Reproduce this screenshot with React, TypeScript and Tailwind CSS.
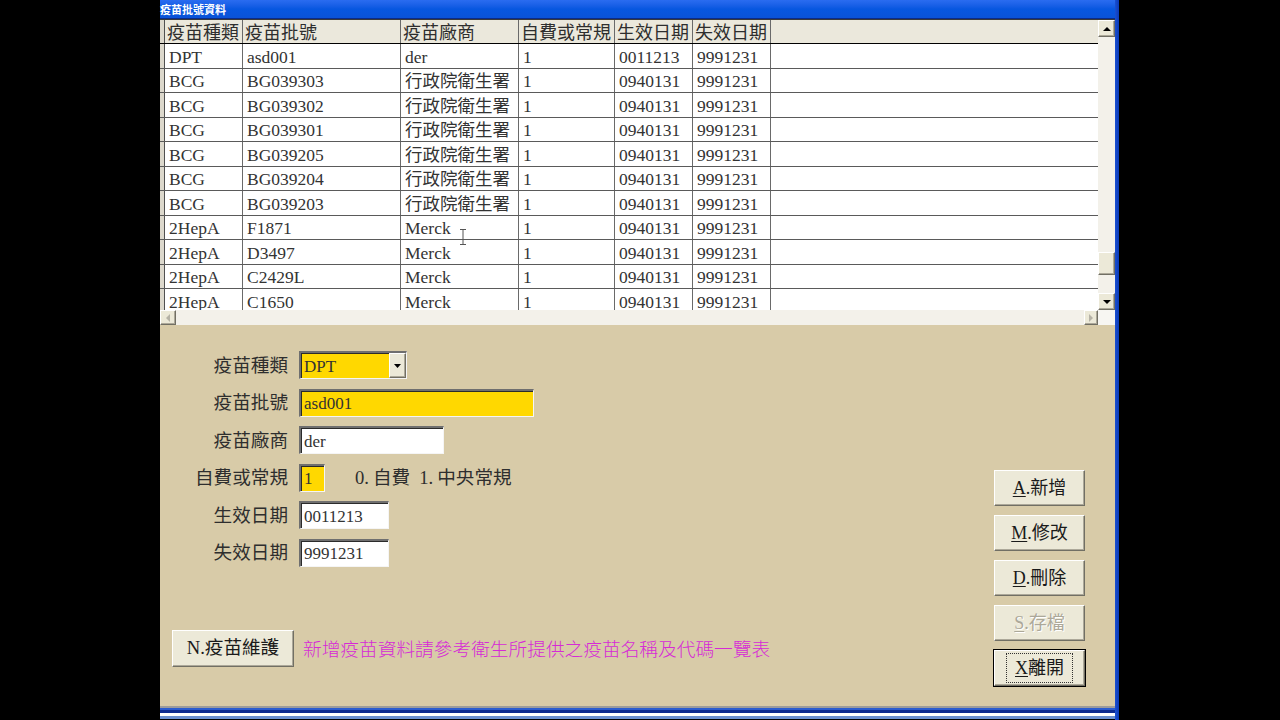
import React from "react";

const colW = ["w-[78px]", "w-[158px]", "w-[118px]", "w-[96px]", "w-[78px]", "w-[78px]"];
const headers = ["疫苗種類", "疫苗批號", "疫苗廠商", "自費或常規", "生效日期", "失效日期"];
const rows: string[][] = [
  ["DPT", "asd001", "der", "1", "0011213", "9991231"],
  ["BCG", "BG039303", "行政院衛生署", "1", "0940131", "9991231"],
  ["BCG", "BG039302", "行政院衛生署", "1", "0940131", "9991231"],
  ["BCG", "BG039301", "行政院衛生署", "1", "0940131", "9991231"],
  ["BCG", "BG039205", "行政院衛生署", "1", "0940131", "9991231"],
  ["BCG", "BG039204", "行政院衛生署", "1", "0940131", "9991231"],
  ["BCG", "BG039203", "行政院衛生署", "1", "0940131", "9991231"],
  ["2HepA", "F1871", "Merck", "1", "0940131", "9991231"],
  ["2HepA", "D3497", "Merck", "1", "0940131", "9991231"],
  ["2HepA", "C2429L", "Merck", "1", "0940131", "9991231"],
  ["2HepA", "C1650", "Merck", "1", "0940131", "9991231"],
];

const raised =
  "bg-[#ece9d8] border-t border-l border-t-white border-l-white border-b border-r border-b-[#716f64] border-r-[#716f64] shadow-[inset_-1px_-1px_0_#aca899]";

function Arrow({ dir }: { dir: "up" | "down" | "left" | "right" }) {
  const pts = {
    up: "1,5 5,1 9,5",
    down: "1,1 5,5 9,1",
    left: "5,1 1,5 5,9",
    right: "1,1 5,5 1,9",
  }[dir];
  const dims = dir === "up" || dir === "down" ? { w: 10, h: 6 } : { w: 6, h: 10 };
  return (
    <svg width={dims.w} height={dims.h} viewBox={`0 0 ${dims.w} ${dims.h}`}>
      <polygon points={pts} fill={dir === "left" || dir === "right" ? "#b5b2a6" : "#000"} />
    </svg>
  );
}

function Field({ w, bg, value }: { w: string; bg: string; value: string }) {
  return (
    <div
      className={`${w} ${bg} h-[28px] border-t-2 border-l-2 border-t-[#6f6f6f] border-l-[#6f6f6f] border-b border-r border-b-[#f5f5f5] border-r-[#f5f5f5] shadow-[inset_1px_1px_0_#2b2b2b] pl-[3px] pt-[1px] flex items-center text-[17px] leading-none text-[#333]`}
    >
      {value}
    </div>
  );
}

function Btn({
  k,
  rest,
  disabled,
  focused,
  w = "w-[91px]",
}: {
  k: string;
  rest: string;
  disabled?: boolean;
  focused?: boolean;
  w?: string;
}) {
  return (
    <div
      className={`${w} h-[36px] ${raised} flex items-center justify-center text-[18px] leading-none ${
        disabled ? "text-[#aca899] [text-shadow:1px_1px_0_#ffffff]" : "text-[#1a1a1a]"
      } ${focused ? "outline outline-1 outline-black" : ""}`}
    >
      <div className={`px-[8px] py-[5px] ${focused ? "border border-dotted border-[#333]" : "border border-transparent"}`}>
        <span className="underline underline-offset-[2px]">{k}</span>
        {rest}
      </div>
    </div>
  );
}

export default function App() {
  return (
    <div className="w-[1280px] h-[720px] bg-black overflow-hidden flex font-['Liberation_Serif','Noto_Sans_CJK_TC',serif]">
      <div className="ml-[160px] flex h-[720px]">
        <div className="w-[955px] flex flex-col">
          {/* title bar */}
          <div className="h-[19px] bg-gradient-to-b from-[#2a6cf0] via-[#0757e0] to-[#0a53d8] flex items-center text-white text-[11px] font-bold leading-none font-['Noto_Sans_CJK_TC',sans-serif] border-b border-[#0a2c8a]">
            疫苗批號資料
          </div>

          {/* grid */}
          <div className="h-[306px] flex flex-col bg-white border-t border-[#3a3a3a]">
            <div className="h-[290px] flex">
              <div className="w-[938px] flex flex-col overflow-hidden relative">
                {/* header */}
                <div className="h-[24px] shrink-0 flex bg-[#ebe8dc] border-b border-black">
                  <div className="w-[5px] border-r border-[#505050] bg-[#dcd8cc]" />
                  {headers.map((h, i) => (
                    <div
                      key={h}
                      className={`${colW[i]} border-r border-[#6a6a6a] pl-[2px] pt-[3px] flex items-center text-[18px] leading-none text-[#2e2e2e] whitespace-nowrap overflow-hidden`}
                    >
                      {h}
                    </div>
                  ))}
                  <div className="flex-1" />
                </div>
                {/* rows */}
                {rows.map((r, ri) => (
                  <div key={ri} className="h-[24.5px] shrink-0 flex border-b border-[#5a5a5a]">
                    <div className="w-[5px] border-r border-[#505050] bg-[#dcd8cc]" />
                    {r.map((c, ci) => (
                      <div
                        key={ci}
                        className={`${colW[ci]} border-r border-[#6a6a6a] pl-[4px] pt-[3px] flex items-center text-[17.5px] leading-none text-[#333] whitespace-nowrap overflow-hidden`}
                      >
                        {c}
                      </div>
                    ))}
                    <div className="flex-1" />
                  </div>
                ))}
                {/* text cursor over the grid */}
                <svg className="absolute left-[299px] top-[209px]" width="8" height="16" viewBox="0 0 8 16">
                  <path d="M1 0.5H7M4 0.5V15.5M1 15.5H7" stroke="#555" strokeWidth="1" fill="none" />
                </svg>
              </div>
              {/* vertical scrollbar */}
              <div className="w-[17px] flex flex-col bg-[#f3f1ea]">
                <div className={`h-[17px] ${raised} flex items-center justify-center`}>
                  <Arrow dir="up" />
                </div>
                <div className="flex-1 flex flex-col">
                  <div className="h-[215px]" />
                  <div className={`h-[23px] ${raised}`} />
                </div>
                <div className={`h-[17px] ${raised} flex items-center justify-center`}>
                  <Arrow dir="down" />
                </div>
              </div>
            </div>
            {/* horizontal scrollbar */}
            <div className="h-[16px] flex">
              <div className="w-[938px] flex bg-[#f3f1ea]">
                <div className={`w-[16px] ${raised} flex items-center justify-center`}>
                  <Arrow dir="left" />
                </div>
                <div className="flex-1" />
                <div className={`w-[14px] ${raised} flex items-center justify-center`}>
                  <Arrow dir="right" />
                </div>
              </div>
              <div className="w-[17px] bg-[#f7f6f2]" />
            </div>
          </div>

          {/* form panel */}
          <div className="h-[381px] bg-[#d8cba8] flex flex-col text-[#2e2e2e]">
            <div className="flex pt-[26px]">
              <div className="flex flex-col gap-[9.5px] text-[18.6px] leading-none">
                <div className="flex items-center">
                  <div className="w-[128px] text-right pt-[2px]">疫苗種類</div>
                  <div className="ml-[11px] w-[108px] h-[28px] bg-[#ffd800] border-t-2 border-l-2 border-t-[#6f6f6f] border-l-[#6f6f6f] border-b border-r border-b-[#f5f5f5] border-r-[#f5f5f5] shadow-[inset_1px_1px_0_#2b2b2b] flex items-stretch">
                    <div className="flex-1 pl-[3px] pt-[1px] flex items-center text-[17px] leading-none text-[#333]">DPT</div>
                    <div className={`w-[17px] ${raised} flex items-center justify-center`}>
                      <svg width="7" height="4" viewBox="0 0 7 4">
                        <polygon points="0,0 7,0 3.5,4" fill="#000" />
                      </svg>
                    </div>
                  </div>
                </div>
                <div className="flex items-center">
                  <div className="w-[128px] text-right pt-[2px]">疫苗批號</div>
                  <div className="ml-[11px]">
                    <Field w="w-[235px]" bg="bg-[#ffd800]" value="asd001" />
                  </div>
                </div>
                <div className="flex items-center">
                  <div className="w-[128px] text-right pt-[2px]">疫苗廠商</div>
                  <div className="ml-[11px]">
                    <Field w="w-[145px]" bg="bg-white" value="der" />
                  </div>
                </div>
                <div className="flex items-center">
                  <div className="w-[128px] text-right pt-[2px]">自費或常規</div>
                  <div className="ml-[11px]">
                    <Field w="w-[26px]" bg="bg-[#ffd800]" value="1" />
                  </div>
                  <div className="ml-[30px] pt-[2px] whitespace-nowrap flex">
                    <span className="inline-block w-[18px]">0.</span>
                    <span>自費</span>
                    <span className="inline-block w-[9px]" />
                    <span className="inline-block w-[18px]">1.</span>
                    <span>中央常規</span>
                  </div>
                </div>
                <div className="flex items-center">
                  <div className="w-[128px] text-right pt-[2px]">生效日期</div>
                  <div className="ml-[11px]">
                    <Field w="w-[90px]" bg="bg-white" value="0011213" />
                  </div>
                </div>
                <div className="flex items-center">
                  <div className="w-[128px] text-right pt-[2px]">失效日期</div>
                  <div className="ml-[11px]">
                    <Field w="w-[90px]" bg="bg-white" value="9991231" />
                  </div>
                </div>
              </div>
              <div className="flex-1" />
              <div className="flex flex-col gap-[9px] pt-[119px] mr-[30px]">
                <Btn k="A" rest=".新增" />
                <Btn k="M" rest=".修改" />
                <Btn k="D" rest=".刪除" />
                <Btn k="S" rest=".存檔" disabled />
                <Btn k="X" rest="離開" focused />
              </div>
            </div>
            <div className="flex items-center mt-[-56px] ml-[12px]">
              <div className={`w-[122px] h-[37px] ${raised} flex items-center justify-center text-[18.6px] leading-none text-[#1a1a1a]`}>
                N.疫苗維護
              </div>
              <div className="ml-[9px] text-[18.7px] leading-none text-[#d62ad6] whitespace-nowrap font-['Noto_Sans_CJK_TC',sans-serif] font-light">
                新增疫苗資料請參考衛生所提供之疫苗名稱及代碼一覽表
              </div>
            </div>
          </div>

          {/* bottom window frame */}
          <div className="h-[2px] bg-[#9c9c9c]" />
          <div className="h-[2px] bg-[#2a5cd0]" />
          <div className="h-[3px] bg-[#0c2a90]" />
          <div className="h-[3px] bg-white" />
          <div className="h-[3px] bg-[#6a8fd0]" />
        </div>
        <div className="w-[4px] h-[720px] bg-gradient-to-r from-[#1a4fd0] to-[#0a3ab8]" />
      </div>
    </div>
  );
}
